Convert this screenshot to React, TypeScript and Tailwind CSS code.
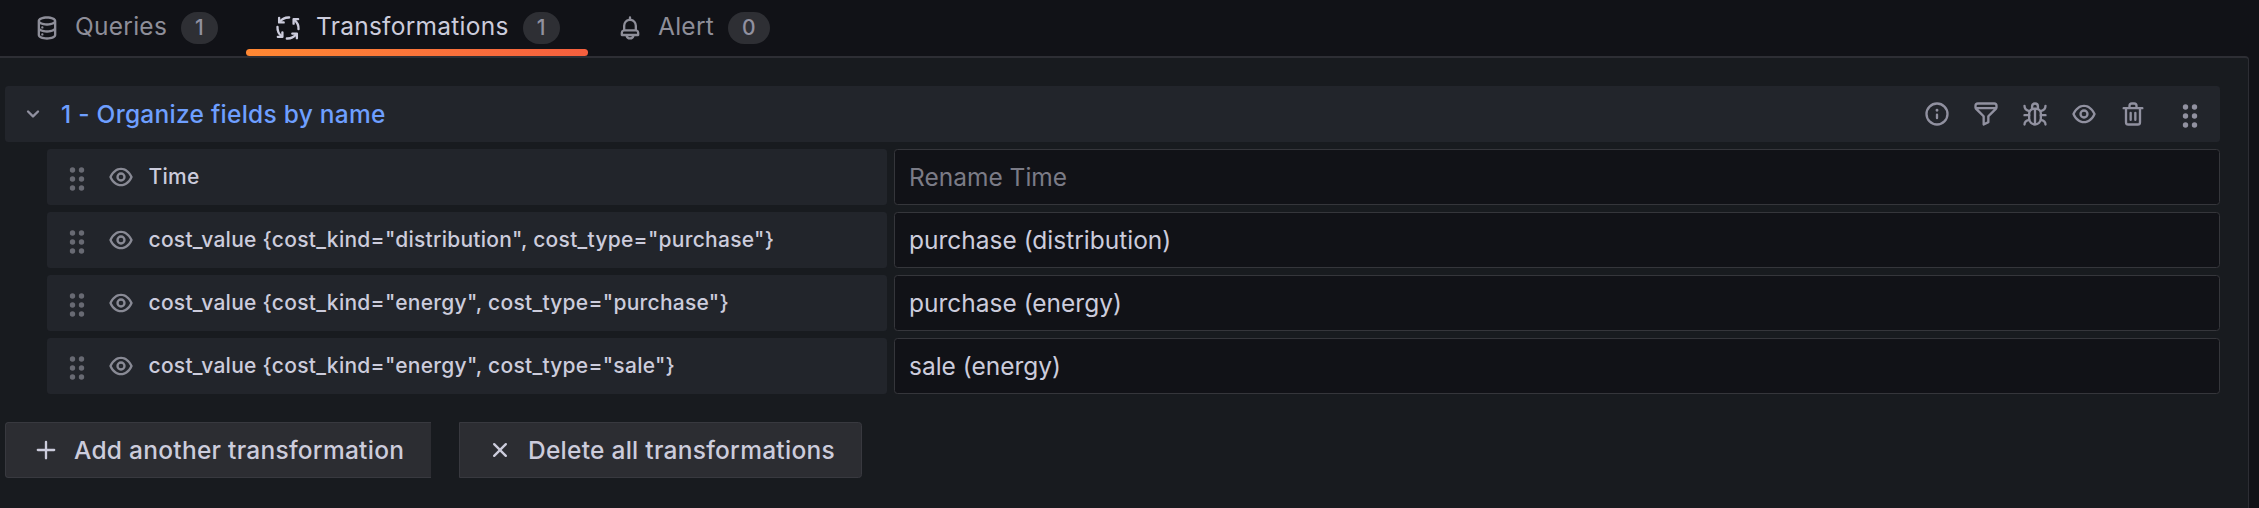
import type { ReactNode } from 'react';

const PATHS = {
  database:
    'M8,16.5a1,1,0,1,0,1,1A1,1,0,0,0,8,16.5ZM12,2C8,2,4,3.37,4,6V18c0,2.63,4,4,8,4s8-1.37,8-4V6C20,3.37,16,2,12,2Zm6,16c0,.71-2.28,2-6,2s-6-1.29-6-2V14.73A13.16,13.16,0,0,0,12,16a13.16,13.16,0,0,0,6-1.27Zm0-6c0,.71-2.28,2-6,2s-6-1.29-6-2V8.73A13.16,13.16,0,0,0,12,10a13.16,13.16,0,0,0,6-1.27ZM12,8C8.28,8,6,6.71,6,6s2.28-2,6-2,6,1.29,6,2S15.72,8,12,8ZM8,10.5a1,1,0,1,0,1,1A1,1,0,0,0,8,10.5Z',
  eye: 'M21.92,11.6C19.9,6.91,16.1,4,12,4S4.1,6.91,2.08,11.6a1,1,0,0,0,0,.8C4.1,17.09,7.9,20,12,20s7.9-2.91,9.92-7.6A1,1,0,0,0,21.92,11.6ZM12,18c-3.17,0-6.17-2.29-7.9-6C5.83,8.29,8.83,6,12,6s6.17,2.29,7.9,6C18.17,15.71,15.17,18,12,18ZM12,8a4,4,0,1,0,4,4A4,4,0,0,0,12,8Zm0,6a2,2,0,1,1,2-2A2,2,0,0,1,12,14Z',
  info: 'M12,2A10,10,0,1,0,22,12,10.01114,10.01114,0,0,0,12,2Zm0,18a8,8,0,1,1,8-8A8.00917,8.00917,0,0,1,12,20Zm0-8.5a1,1,0,0,0-1,1v3a1,1,0,0,0,2,0v-3A1,1,0,0,0,12,11.5Zm0-4a1.25,1.25,0,1,0,1.25,1.25A1.25,1.25,0,0,0,12,7.5Z',
  filter:
    'M19,2H5A3,3,0,0,0,2,5V6.17a3,3,0,0,0,.25,1.2l0,.06a2.81,2.81,0,0,0,.59.86L9,14.41V21a1,1,0,0,0,.47.85A1,1,0,0,0,10,22a1,1,0,0,0,.45-.11l4-2A1,1,0,0,0,15,19V14.41l6.12-6.12a2.81,2.81,0,0,0,.59-.86l0-.06A3,3,0,0,0,22,6.17V5A3,3,0,0,0,19,2ZM13.29,13.29A1,1,0,0,0,13,14v4.38l-2,1V14a1,1,0,0,0-.29-.71L5.41,8H18.59ZM20,6H4V5A1,1,0,0,1,5,4H19a1,1,0,0,1,1,1Z',
  trash:
    'M10,18a1,1,0,0,0,1-1V11a1,1,0,0,0-2,0v6A1,1,0,0,0,10,18ZM20,6H16V5a3,3,0,0,0-3-3H11A3,3,0,0,0,8,5V6H4A1,1,0,0,0,4,8H5V19a3,3,0,0,0,3,3h8a3,3,0,0,0,3-3V8h1a1,1,0,0,0,0-2ZM10,5a1,1,0,0,1,1-1h2a1,1,0,0,1,1,1V6H10Zm7,14a1,1,0,0,1-1,1H8a1,1,0,0,1-1-1V8H17Zm-3-1a1,1,0,0,0,1-1V11a1,1,0,0,0-2,0v6A1,1,0,0,0,14,18Z',
  angleDown:
    'M17,9.17a1,1,0,0,0-1.41,0L12,12.71,8.46,9.17a1,1,0,0,0-1.41,0,1,1,0,0,0,0,1.42l4.24,4.24a1,1,0,0,0,1.42,0L17,10.59A1,1,0,0,0,17,9.17Z',
  plus: 'M19,11H13V5a1,1,0,0,0-2,0v6H5a1,1,0,0,0,0,2h6v6a1,1,0,0,0,2,0V13h6a1,1,0,0,0,0-2Z',
  times:
    'M13.41,12l4.3-4.29a1,1,0,1,0-1.42-1.42L12,10.59,7.71,6.29A1,1,0,0,0,6.29,7.71L10.59,12l-4.3,4.29a1,1,0,0,0,0,1.42,1,1,0,0,0,1.42,0L12,13.41l4.29,4.3a1,1,0,0,0,1.42,0,1,1,0,0,0,0-1.42Z',
  bell: 'M18,13.18V10a6,6,0,0,0-5-5.91V3a1,1,0,0,0-2,0V4.09A6,6,0,0,0,6,10v3.18A3,3,0,0,0,4,16v2a1,1,0,0,0,1,1H8.14a4,4,0,0,0,7.72,0H19a1,1,0,0,0,1-1V16A3,3,0,0,0,18,13.18ZM8,10a4,4,0,0,1,8,0v3H8Zm4,10a2,2,0,0,1-1.72-1h3.44A2,2,0,0,1,12,20Zm6-3H6V16a1,1,0,0,1,1-1H17a1,1,0,0,1,1,1Z',
};

function Icon({ name, className = '' }: { name: keyof typeof PATHS; className?: string }) {
  return (
    <svg viewBox="0 0 24 24" fill="currentColor" className={`size-7 shrink-0 ${className}`}>
      <path d={PATHS[name]} />
    </svg>
  );
}

function StrokeIcon({ children }: { children: ReactNode }) {
  return (
    <svg
      viewBox="0 0 24 24"
      fill="none"
      stroke="currentColor"
      strokeWidth="2"
      strokeLinecap="round"
      strokeLinejoin="round"
      className="size-7 shrink-0"
    >
      {children}
    </svg>
  );
}

function ProcessIcon() {
  return (
    <StrokeIcon>
      {[0, 90, 180, 270].map((angle) => (
        <g key={angle} transform={`rotate(${angle} 12 12)`}>
          <path d="M13 3A9.5 9.5 0 0 0 5 6.6" />
          <path d="M4.4 3.3v3.9h3.9" />
        </g>
      ))}
    </StrokeIcon>
  );
}

function BugIcon() {
  return (
    <StrokeIcon>
      <path d="M7 11.5a4 4 0 0 1 4-4h2a4 4 0 0 1 4 4V16a5 5 0 0 1-10 0z" />
      <path d="M9.5 7V5.5a2.5 2.5 0 0 1 5 0V7M12 8v12" />
      <path d="M3 13h4M17 13h4M3 5c0 2.5 1.5 4 4 4.5M21 5c0 2.5-1.5 4-4 4.5M3 21c0-2 1.5-3.5 4-4M21 21c0-2-1.5-3.5-4-4" />
    </StrokeIcon>
  );
}

function DragDots({ className = '' }: { className?: string }) {
  return (
    <svg viewBox="0 0 16 24" fill="currentColor" className={`h-6 w-4 shrink-0 ${className}`}>
      {[3, 12, 21].map((y) => (
        <g key={y}>
          <circle cx="3.5" cy={y} r="2.7" />
          <circle cx="12.5" cy={y} r="2.7" />
        </g>
      ))}
    </svg>
  );
}

function Tab({ icon, label, count, active = false, className = '' }: { icon: ReactNode; label: string; count: number; active?: boolean; className?: string }) {
  return (
    <button className={`relative flex h-14 items-center ${active ? 'text-[#ccccdc]' : 'text-[#8e8e99]'} ${className}`}>
      {icon}
      <span className="ml-[14px] pb-1 text-[24.5px] leading-[38px] tracking-[0.26px]">{label}</span>
      <span className="ml-[14px] flex h-8 items-center rounded-full bg-[#2e2f34] px-[14px] text-[21px] font-medium tracking-[0.22px] text-[#9191a0]">
        {count}
      </span>
      {active && <span className="absolute inset-x-0 bottom-0 h-[7px] rounded-[3.5px] bg-linear-to-r from-[#ff8833] to-[#f55f3e]" />}
    </button>
  );
}

const FIELDS = [
  { name: 'Time', value: '' },
  { name: 'cost_value {cost_kind="distribution", cost_type="purchase"}', value: 'purchase (distribution)' },
  { name: 'cost_value {cost_kind="energy", cost_type="purchase"}', value: 'purchase (energy)' },
  { name: 'cost_value {cost_kind="energy", cost_type="sale"}', value: 'sale (energy)' },
];

export default function App() {
  return (
    <div className="flex h-[508px] w-[2259px] flex-col overflow-hidden bg-[#111217] font-['Inter',sans-serif] text-[#ccccdc]">
      <div className="flex h-14 shrink-0">
        <Tab className="w-[218px] pl-[33px]" icon={<Icon name="database" />} label="Queries" count={1} />
        <Tab className="ml-7 w-[342px] pl-7" icon={<ProcessIcon />} label="Transformations" count={1} active />
        <Tab className="ml-7" icon={<Icon name="bell" />} label="Alert" count={0} />
      </div>

      <div className="flex w-[2249px] grow flex-col rounded-tr-[4px] border-t-2 border-r border-[#2d2e34] bg-[#181b1f] pt-7 pr-7 pl-[5px]">
        <div className="flex h-14 shrink-0 items-center rounded-[3.5px] bg-[#22252b] pr-[22px] pl-[14px]">
          <Icon name="angleDown" className="text-[#9191a0]" />
          <span className="ml-[14px] text-[24.5px] font-medium tracking-[0.26px] text-[#6e9fff]">
            1 - Organize fields by name
          </span>
          <div className="ml-auto flex items-center gap-[21px] text-[#9191a0]">
            <Icon name="info" />
            <Icon name="filter" />
            <BugIcon />
            <Icon name="eye" />
            <Icon name="trash" />
            <DragDots className="mt-[3px] ml-[14px]" />
          </div>
        </div>

        <div className="mt-[7px] ml-[42px] flex flex-col gap-[7px]">
          {FIELDS.map((field) => (
            <div key={field.name} className="flex h-14 gap-[7px]">
              <div className="flex w-[840px] items-center rounded-[3.5px] bg-[#22252b] pl-[21.5px]">
                <DragDots className="mt-[3px] text-[#686a73]" />
                <Icon name="eye" className="ml-[22.5px] text-[#898a95]" />
                <span className="ml-[13.5px] text-[21px] font-medium tracking-[0.27px]">{field.name}</span>
              </div>
              <input
                className="min-w-0 grow rounded-[3.5px] border border-[#35363b] bg-[#111217] px-[14px] text-[24.5px] outline-none placeholder:text-[#7b7b86]"
                defaultValue={field.value}
                placeholder={`Rename ${field.name}`}
              />
            </div>
          ))}
        </div>

        <div className="mt-7 flex gap-7 text-[24.5px] font-medium tracking-[0.26px]">
          <button className="flex h-14 w-[426px] items-center rounded-l-[3.5px] border border-r-0 border-[#38393f] bg-[#2c2d32] pl-[26px]">
            <Icon name="plus" />
            <span className="ml-[14px]">Add another transformation</span>
          </button>
          <button className="flex h-14 w-[403px] items-center rounded-r-[3.5px] border border-[#38393f] bg-[#2c2d32] pl-[26px]">
            <Icon name="times" />
            <span className="ml-[14px]">Delete all transformations</span>
          </button>
        </div>
      </div>
    </div>
  );
}
